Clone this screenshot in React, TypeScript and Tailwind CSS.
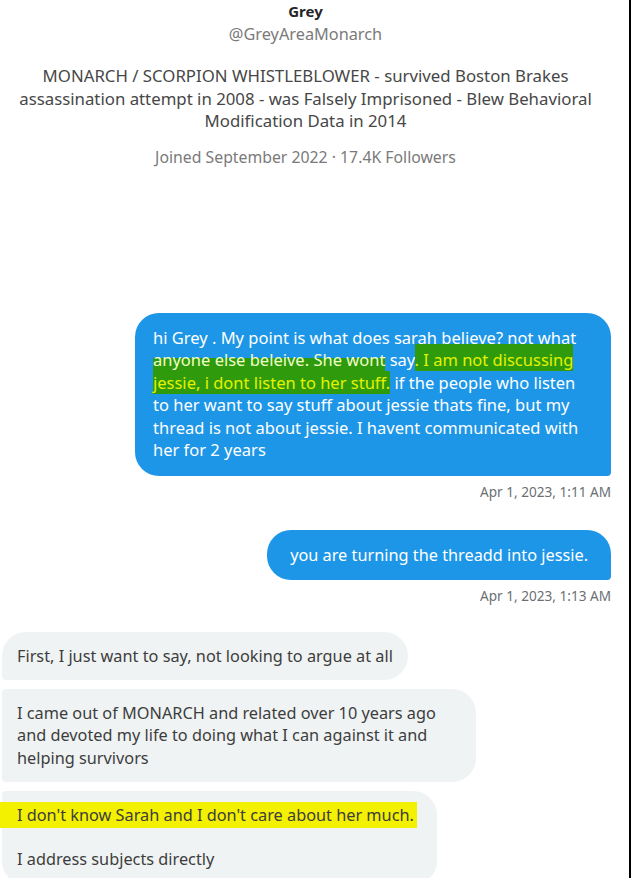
import React from "react";

const font = { fontFamily: '"Noto Sans", "Liberation Sans", sans-serif' };

function Stamp({ children }: { children: React.ReactNode }) {
  return (
    <div className="mt-[8px] flex justify-end text-[13.6px] leading-[16px] text-[#6b6f73]">
      {children}
    </div>
  );
}

export default function App() {
  return (
    <div className="flex h-[878px] w-[631px] overflow-hidden bg-white" style={font}>
      <div className="flex w-[629px] flex-col">
        <div className="mt-[2px] h-[1px] w-full bg-[#fbdcdc]" />
        <div className="w-[611px] text-center">
          <div className="-mt-[1px] text-[15px] font-bold leading-[20px] text-[#262626]">Grey</div>
          <div className="mt-[3px] text-[16.3px] leading-[20px] text-[#7a7a7a]">@GreyAreaMonarch</div>
          <div className="mt-[21px] text-[16.8px] leading-[22.5px] text-[#474747]">
            <div className="whitespace-nowrap">MONARCH / SCORPION WHISTLEBLOWER - survived Boston Brakes</div>
            <div className="whitespace-nowrap">assassination attempt in 2008 - was Falsely Imprisoned - Blew Behavioral</div>
            <div className="whitespace-nowrap">Modification Data in 2014</div>
          </div>
          <div className="mt-[14px] text-[15.8px] leading-[20px] text-[#7a7a7a]">
            Joined September 2022 · 17.4K Followers
          </div>
        </div>
        <div className="mt-[128px] h-[1px] w-[608px] bg-[#f1f1f1]" />

        <div className="flex w-[611px] flex-col">
          <div className="mt-[18px] flex justify-end">
            <div className="w-[476px] rounded-[24px] rounded-br-[4px] bg-[#1d96e8] px-[18px] py-[14px] text-[16.5px] leading-[22.5px] text-white">
              <div className="whitespace-nowrap">hi Grey . My point is what does sarah believe? not what</div>
              <div className="whitespace-nowrap">
                <span className="bg-[linear-gradient(to_bottom,transparent_45%,#2f9a0c_45%)] text-[#f0ffc8]">anyone else beleive. She wont</span>{" "}
                say<span className="bg-[#2f9a0c] pt-[4px] text-[#e4f200]">. I am not discussing</span>
              </div>
              <div className="whitespace-nowrap">
                <span className="bg-[#2f9a0c] text-[#e4f200]">jessie, i dont listen to her stuff.</span> if the people who listen
              </div>
              <div className="whitespace-nowrap">to her want to say stuff about jessie thats fine, but my</div>
              <div className="whitespace-nowrap">thread is not about jessie. I havent communicated with</div>
              <div className="whitespace-nowrap">her for 2 years</div>
            </div>
          </div>
          <Stamp>Apr 1, 2023, 1:11 AM</Stamp>

          <div className="mt-[30px] flex justify-end">
            <div className="whitespace-nowrap rounded-[24px] rounded-br-[4px] bg-[#1d96e8] px-[23px] py-[14px] text-[16.3px] leading-[22px] text-white">
              you are turning the threadd into jessie.
            </div>
          </div>
          <Stamp>Apr 1, 2023, 1:13 AM</Stamp>

          <div className="mt-[28px] flex flex-col items-start gap-[9px] pl-[2px] text-[16.3px] leading-[22.5px] text-[#3d3d3d]">
            <div className="whitespace-nowrap rounded-[24px] rounded-bl-[4px] bg-[#eff3f4] px-[15px] py-[13px]">
              First, I just want to say, not looking to argue at all
            </div>
            <div className="w-[474px] rounded-[24px] rounded-l-[4px] bg-[#eff3f4] px-[15px] py-[12.5px]">
              <div className="whitespace-nowrap">I came out of MONARCH and related over 10 years ago</div>
              <div className="whitespace-nowrap">and devoted my life to doing what I can against it and</div>
              <div className="whitespace-nowrap">helping survivors</div>
            </div>
            <div className="w-[435px] rounded-[24px] rounded-tl-[4px] bg-[#eff3f4] px-[15px] pt-[11px] pb-[14px]">
              <div className="-ml-[17px] inline-block whitespace-nowrap bg-[#f3f000] py-[2px] pl-[17px] pr-[3px]">
                I don't know Sarah and I don't care about her much.
              </div>
              <div className="h-[20px]" />
              <div>I address subjects directly</div>
            </div>
          </div>
        </div>
      </div>
      <div className="h-full w-[2px] bg-black" />
    </div>
  );
}
